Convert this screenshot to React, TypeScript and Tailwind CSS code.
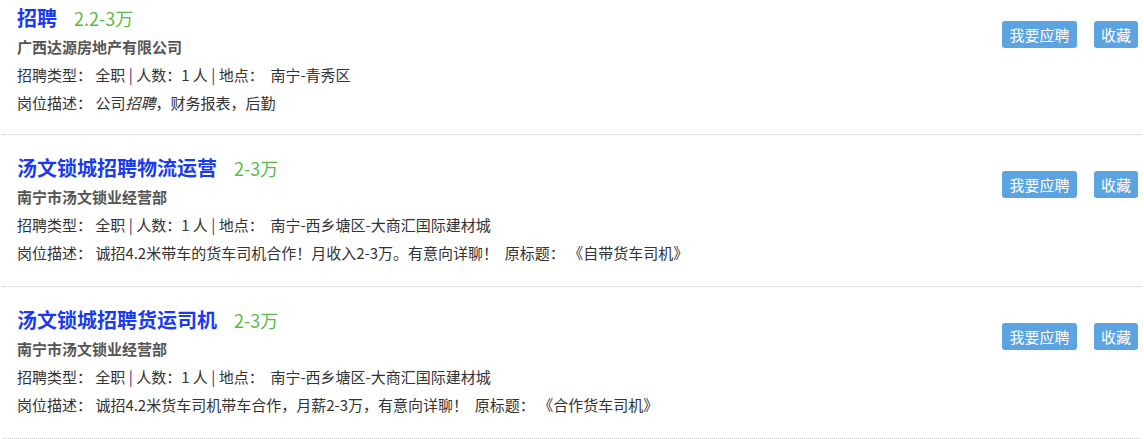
import React from "react";

type Job = {
  title: string;
  salary: string;
  company: string;
  location: string;
  desc: React.ReactNode;
};

const jobs: Job[] = [
  {
    title: "招聘",
    salary: "2.2-3万",
    company: "广西达源房地产有限公司",
    location: "南宁-青秀区",
    desc: (
      <>
        公司<em className="italic">招聘</em>，财务报表，后勤
      </>
    ),
  },
  {
    title: "汤文锁城招聘物流运营",
    salary: "2-3万",
    company: "南宁市汤文锁业经营部",
    location: "南宁-西乡塘区-大商汇国际建材城",
    desc: "诚招4.2米带车的货车司机合作！月收入2-3万。有意向详聊！  原标题： 《自带货车司机》",
  },
  {
    title: "汤文锁城招聘货运司机",
    salary: "2-3万",
    company: "南宁市汤文锁业经营部",
    location: "南宁-西乡塘区-大商汇国际建材城",
    desc: "诚招4.2米货车司机带车合作，月薪2-3万，有意向详聊！  原标题： 《合作货车司机》",
  },
];

function JobItem({ job, first }: { job: Job; first: boolean }) {
  return (
    <div
      className={`mx-[3px] flex border-b border-dotted border-[#c8c8c8] pl-[14px] pr-[3px] ${
        first ? "pt-[3px] pb-[17px]" : "pt-[18px] pb-[19px]"
      }`}
    >
      <div className="flex-1">
        {/* title + salary */}
        <div className="flex h-[30px] items-center">
          <span className="text-[20px] font-bold text-[#1a3af2]">{job.title}</span>
          <span className="ml-[17px] text-[18px] text-[#5cb94a]">{job.salary}</span>
        </div>
        <div className="text-[15px] font-bold leading-[28px] text-[#555]">{job.company}</div>
        <div className="text-[15px] leading-[28px] text-[#333] whitespace-pre">
          招聘类型： 全职 <span className="text-[#3d3570]">|</span> 人数：1 人{" "}
          <span className="text-[#3d3570]">|</span> 地点：  {job.location}
        </div>
        <div className="text-[15px] leading-[28px] text-[#333] whitespace-pre">
          岗位描述： {job.desc}
        </div>
      </div>
      <div className="mt-[18px] flex items-start gap-[17px]">
        <button className="h-[27px] w-[75px] rounded-[3px] bg-[#5ba4e1] text-[15px] leading-[27px] text-white">
          我要应聘
        </button>
        <button className="h-[27px] w-[44px] rounded-[3px] bg-[#5ba4e1] text-[15px] leading-[27px] text-white">
          收藏
        </button>
      </div>
    </div>
  );
}

export default function App() {
  return (
    <div
      className="h-[439px] w-[1144px] overflow-hidden bg-white"
      style={{ fontFamily: '"Noto Sans CJK SC", "Noto Sans", sans-serif' }}
    >
      {jobs.map((job, i) => (
        <JobItem key={i} job={job} first={i === 0} />
      ))}
    </div>
  );
}
